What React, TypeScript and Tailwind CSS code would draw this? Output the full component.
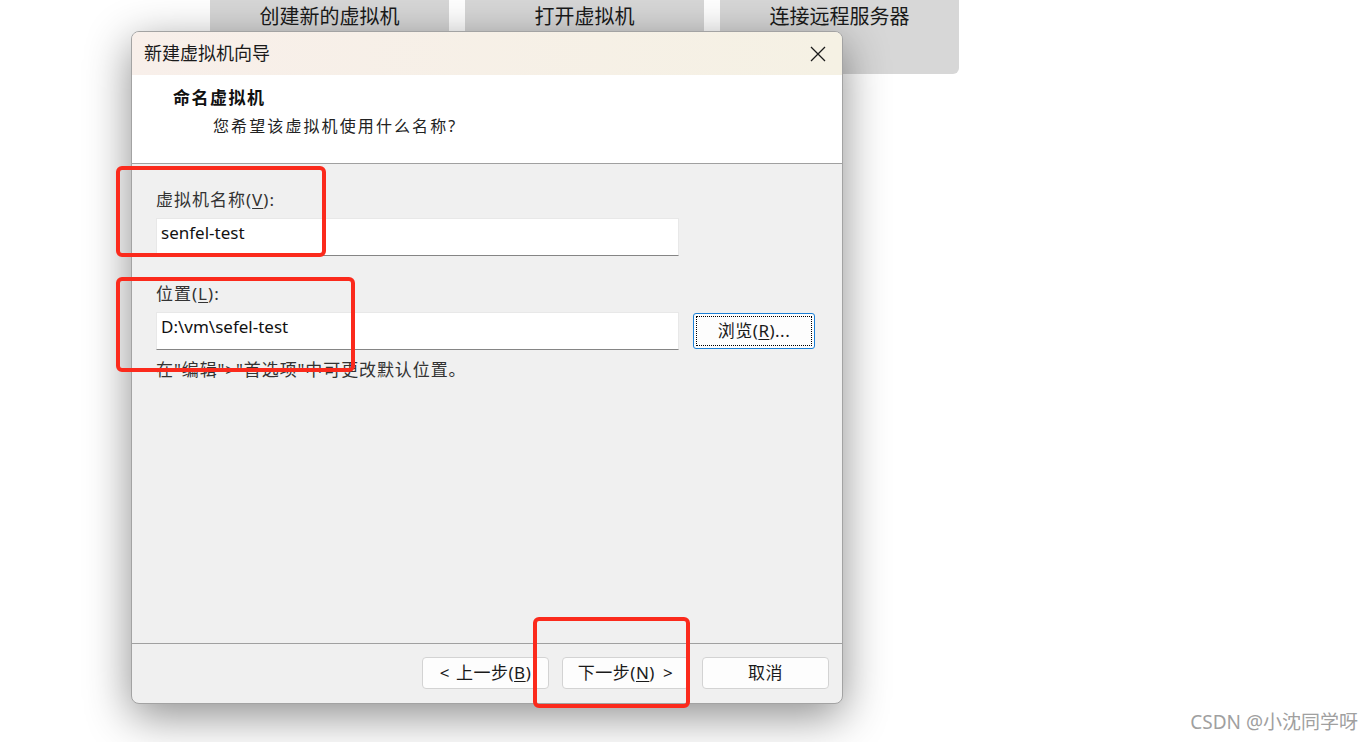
const font = "font-['Noto_Sans','Noto_Sans_CJK_SC',sans-serif]";

function Tile({ label, className = "" }: { label: string; className?: string }) {
  return (
    <div
      className={`w-[239px] h-[74px] bg-[#d7d7d7] rounded-b-md flex justify-center pt-[3px] text-[20px] leading-[28px] text-[#1a1a1a] ${className}`}
    >
      {label}
    </div>
  );
}

function Mnemonic({ text, k, after = "" }: { text: string; k: string; after?: string }) {
  return (
    <span>
      {text}(<span className="underline underline-offset-2">{k}</span>){after}
    </span>
  );
}

function FooterButton({ children }: { children: React.ReactNode }) {
  return (
    <button className="w-[127px] h-[32px] rounded-[4px] border border-[#d3d3d3] bg-[#fdfdfd] text-[17px] tracking-[0.5px] text-[#1a1a1a] flex items-center justify-center">
      {children}
    </button>
  );
}

function RedBox({ className }: { className: string }) {
  return (
    <div className={`absolute border-[4px] border-[#fb2a1c] rounded-[6px] pointer-events-none ${className}`} />
  );
}

export default function App() {
  return (
    <div className={`relative w-full h-[742px] bg-white overflow-hidden ${font}`}>
      {/* botões do fundo */}
      <div className="flex gap-4 pl-[210px]">
        <Tile label="创建新的虚拟机" />
        <Tile label="打开虚拟机" />
        <Tile label="连接远程服务器" />
      </div>

      {/* janela do assistente */}
      <div className="absolute left-[131px] top-[31px] w-[712px] h-[673px] rounded-[8px] border-[1.5px] border-[#a3a3a3] bg-[#f0f0f0] shadow-[0_12px_45px_rgba(0,0,0,0.45)] flex flex-col overflow-hidden">
        <div className="h-[43px] shrink-0 bg-gradient-to-r from-[#f8efea] to-[#f5f1e4] flex items-center justify-between pl-[12px] pr-[14px]">
          <span className="text-[18px] text-[#1a1a1a]">新建虚拟机向导</span>
          <svg width="16" height="16" viewBox="0 0 16 16" className="mr-[2px]">
            <path d="M1 1 L15 15 M15 1 L1 15" stroke="#1a1a1a" strokeWidth="1.3" />
          </svg>
        </div>

        <div className="h-[89px] shrink-0 bg-white border-b border-[#a0a0a0] pt-[11px] pl-[41px]">
          <div className="text-[17px] font-bold tracking-[1.5px] text-[#111] leading-[24px]">命名虚拟机</div>
          <div className="pl-[40px] mt-[4px] text-[16px] tracking-[2.1px] text-[#222] leading-[24px]">
            您希望该虚拟机使用什么名称?
          </div>
        </div>

        <div className="flex-1 pl-[24px] pr-[26px] pt-[24px] text-[#333]">
          <div className="text-[17px] leading-[24px] tracking-[1px]">
            <Mnemonic text="虚拟机名称" k="V" after=":" />
          </div>
          <div className="mt-[6px] w-[523px] h-[38px] bg-white border border-[#e8e8e8] border-b-[1.5px] border-b-[#858585] flex items-center pl-[4px] pb-[9px] text-[17px] text-[#111]">
            senfel-test
          </div>

          <div className="mt-[26px] text-[17px] leading-[24px] tracking-[1px]">
            <Mnemonic text="位置" k="L" after=":" />
          </div>
          <div className="mt-[6px] flex items-center gap-[14px]">
            <div className="w-[523px] h-[38px] bg-white border border-[#e8e8e8] border-b-[1.5px] border-b-[#858585] flex items-center pl-[4px] pb-[9px] text-[17px] text-[#111]">
              D:\vm\sefel-test
            </div>
            <button className="w-[122px] h-[36px] rounded-[3px] border border-[#1a7fd6] bg-[#fdfdfd] p-[2px]">
              <span className="w-full h-full border border-dotted border-black flex items-center justify-center text-[17px] tracking-[0.5px] text-[#1a1a1a]">
                <Mnemonic text="浏览" k="R" after="..." />
              </span>
            </button>
          </div>
          <div className="mt-[9px] text-[17px] leading-[22px] tracking-[0.9px] text-[#333]">
            在"编辑"&gt;"首选项"中可更改默认位置。
          </div>
        </div>

        <div className="h-[60px] shrink-0 border-t border-[#a0a0a0] flex items-center justify-end gap-[13px] pr-[13px] pb-[1px]">
          <FooterButton>
            <span>&lt; </span>
            <span className="ml-[6px]"><Mnemonic text="上一步" k="B" /></span>
          </FooterButton>
          <FooterButton>
            <Mnemonic text="下一步" k="N" />
            <span className="ml-[8px]">&gt;</span>
          </FooterButton>
          <FooterButton>取消</FooterButton>
        </div>
      </div>

      {/* marcações vermelhas */}
      <RedBox className="left-[116px] top-[166px] w-[210px] h-[91px]" />
      <RedBox className="left-[116px] top-[277px] w-[239px] h-[95px]" />
      <RedBox className="left-[533px] top-[617px] w-[157px] h-[91px]" />

      <div className="absolute right-[14px] bottom-[6px] text-[19px] text-[#a0a0a0]">
        CSDN @小沈同学呀
      </div>
    </div>
  );
}
